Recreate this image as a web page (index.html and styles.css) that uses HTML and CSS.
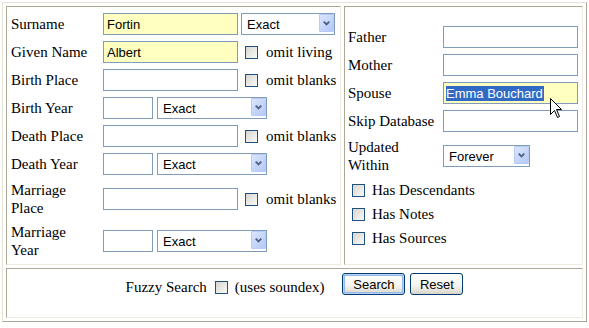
FILE: index.html
```html
<!DOCTYPE html>
<html>
<head>
<meta charset="UTF-8">
<title>Search</title>
<link rel="stylesheet" href="styles.css">
</head>
<body>
<form class="frame">
	<div class="cell left">
		<div class="grid">
			<label>Surname</label>
			<div class="f">
				<input class="txt w135 filled" value="Fortin">
				<span class="sel w94 ml3"><select><option>Exact</option></select><b class="arr"><svg width="7" height="5" viewBox="0 0 7 5"><polyline points="0.7,0.7 3.5,3.5 6.3,0.7" fill="none" stroke="#4d6185" stroke-width="1.8"/></svg></b></span>
			</div>
			<label>Given Name</label>
			<div class="f">
				<input class="txt w135 filled" value="Albert">
				<input type="checkbox" class="chk ml7"><span class="opt">omit living</span>
			</div>
			<label>Birth Place</label>
			<div class="f">
				<input class="txt w135">
				<input type="checkbox" class="chk ml7"><span class="opt">omit blanks</span>
			</div>
			<label>Birth Year</label>
			<div class="f">
				<input class="txt w50">
				<span class="sel w110 ml4"><select><option>Exact</option></select><b class="arr"><svg width="7" height="5" viewBox="0 0 7 5"><polyline points="0.7,0.7 3.5,3.5 6.3,0.7" fill="none" stroke="#4d6185" stroke-width="1.8"/></svg></b></span>
			</div>
			<label>Death Place</label>
			<div class="f">
				<input class="txt w135">
				<input type="checkbox" class="chk ml7"><span class="opt">omit blanks</span>
			</div>
			<label>Death Year</label>
			<div class="f">
				<input class="txt w50">
				<span class="sel w110 ml4"><select><option>Exact</option></select><b class="arr"><svg width="7" height="5" viewBox="0 0 7 5"><polyline points="0.7,0.7 3.5,3.5 6.3,0.7" fill="none" stroke="#4d6185" stroke-width="1.8"/></svg></b></span>
			</div>
			<label>Marriage Place</label>
			<div class="f">
				<input class="txt w135">
				<input type="checkbox" class="chk ml7"><span class="opt">omit blanks</span>
			</div>
			<label>Marriage Year</label>
			<div class="f">
				<input class="txt w50">
				<span class="sel w110 ml4"><select><option>Exact</option></select><b class="arr"><svg width="7" height="5" viewBox="0 0 7 5"><polyline points="0.7,0.7 3.5,3.5 6.3,0.7" fill="none" stroke="#4d6185" stroke-width="1.8"/></svg></b></span>
			</div>
		</div>
	</div>
	<div class="cell right">
		<div class="grid rgrid">
			<label>Father</label>
			<div class="f"><input class="txt w135"></div>
			<label>Mother</label>
			<div class="f"><input class="txt w135"></div>
			<label>Spouse</label>
			<div class="f spouse">
				<div class="txt w135 filled fake"><span class="hl">Emma Bouchard</span></div>
				<svg class="cursor" width="13" height="21" viewBox="0 0 13 21"><path d="M0.5,0.5 L0.5,16.5 L4.5,12.5 L7.5,19.5 L9.5,18.5 L6.5,11.5 L11.5,11.5 Z" fill="#fff" stroke="#000" stroke-width="1"/></svg>
			</div>
			<label>Skip Database</label>
			<div class="f"><input class="txt w135"></div>
			<label>Updated Within</label>
			<div class="f">
				<span class="sel w87"><select><option>Forever</option></select><b class="arr"><svg width="7" height="5" viewBox="0 0 7 5"><polyline points="0.7,0.7 3.5,3.5 6.3,0.7" fill="none" stroke="#4d6185" stroke-width="1.8"/></svg></b></span>
			</div>
		</div>
		<ul class="checks">
			<li><input type="checkbox" class="chk"><span>Has Descendants</span></li>
			<li><input type="checkbox" class="chk"><span>Has Notes</span></li>
			<li><input type="checkbox" class="chk"><span>Has Sources</span></li>
		</ul>
	</div>
	<div class="cell bottom">
		<div class="fuzzy">
			<span>Fuzzy Search</span>
			<input type="checkbox" class="chk">
			<span>(uses soundex)</span>
		</div>
		<button type="button" class="btn focus">Search</button>
		<button type="reset" class="btn">Reset</button>
	</div>
</form>
</body>
</html>
```

FILE: styles.css
```css
body{
	margin: 0;
	background: #fff;
	font: 15px/18px "Liberation Serif", "Times New Roman", serif;
	color: #000;
}
.frame{
	margin: 2px 0 0 2px;
	width: 585px;
	box-sizing: border-box;
	border: 1px solid;
	border-color: #e4e2d6 #a8a698 #a8a698 #e4e2d6;
	padding: 3px;
	display: grid;
	grid-template-columns: 335px 239px;
	grid-template-rows: 259px 50px;
	gap: 3px;
}
.cell{
	box-sizing: border-box;
	border: 1px solid;
	border-color: #aca899 #eeece0 #eeece0 #aca899;
	position: relative;
}
.left{
	padding: 6px 0 0 4px;
}
.right{
	padding: 19px 0 0 3px;
}
.bottom{
	grid-column: 1 / 3;
	display: flex;
	justify-content: center;
	align-items: flex-start;
	padding-top: 4px;
}
.grid{
	display: grid;
	grid-template-columns: 84px auto;
	column-gap: 8px;
	row-gap: 6px;
	align-items: center;
}
.rgrid{
	grid-template-columns: 91px 135px;
	column-gap: 4px;
}
.f{
	display: flex;
	align-items: center;
	height: 22px;
}
.txt{
	box-sizing: border-box;
	height: 22px;
	margin: 0;
	border: 1px solid #7f9db9;
	padding: 0 3px;
	font: 13px "Liberation Sans", Arial, sans-serif;
	color: #000;
	background: #fff;
	outline: none;
}
.filled{
	background: #ffffc0;
}
.fake{
	display: flex;
	align-items: center;
	padding-left: 2px;
}
.hl{
	background: #316ac5;
	color: #fff;
	line-height: 15px;
	padding-right: 1px;
}
.spouse{
	position: relative;
}
.cursor{
	position: absolute;
	left: 107px;
	top: 16px;
}
.sel{
	position: relative;
	display: inline-block;
	height: 22px;
}
.sel select{
	-webkit-appearance: none;
	appearance: none;
	box-sizing: border-box;
	width: 100%;
	height: 22px;
	margin: 0;
	border: 1px solid #7f9db9;
	border-radius: 0;
	padding: 0 0 0 5px;
	background: #fff;
	font: 13px "Liberation Sans", Arial, sans-serif;
	color: #000;
}
.arr{
	position: absolute;
	right: 1px;
	top: 1px;
	width: 15px;
	height: 18px;
	box-sizing: border-box;
	border: 1px solid #b7cbf6;
	border-radius: 1px;
	background: linear-gradient(135deg, #dbe6fd, #b4c8f6);
	display: flex;
	align-items: center;
	justify-content: center;
	pointer-events: none;
}
.arr svg{
	margin-top: 1px;
}
.chk{
	-webkit-appearance: none;
	appearance: none;
	width: 13px;
	height: 13px;
	margin: 0;
	box-sizing: border-box;
	border: 1px solid #1c5180;
	background: linear-gradient(135deg, #d6d5cd, #fbfbf9);
	flex: none;
}
.opt{
	margin-left: 8px;
	white-space: nowrap;
}
.checks{
	list-style: none;
	margin: 4px 0 0 4px;
	padding: 0;
}
.checks li{
	display: flex;
	align-items: center;
	height: 24px;
}
.checks span{
	margin-left: 7px;
}
.fuzzy{
	display: flex;
	align-items: center;
	height: 18px;
	margin-top: 5px;
	margin-right: 18px;
}
.fuzzy .chk{
	margin: 0 7px 0 8px;
}
.btn{
	box-sizing: border-box;
	height: 22px;
	margin: 0;
	padding: 0 8px;
	border: 1px solid #003c74;
	border-radius: 3px;
	background: linear-gradient(#ffffff, #f4f3ee 60%, #d8d5c8);
	font: 13px "Liberation Sans", Arial, sans-serif;
	color: #000;
}
.btn.focus{
	width: 63px;
	box-shadow: inset 0 0 0 1px #b8d0f4, inset 0 0 0 2px #98b8ea;
}
.btn + .btn{
	margin-left: 5px;
	width: 53px;
}
/* widths and spacing */
.w135{width: 135px;}
.w50{width: 50px;}
.w94{width: 94px;}
.w110{width: 110px;}
.w87{width: 87px;}
.ml3{margin-left: 3px;}
.ml4{margin-left: 4px;}
.ml7{margin-left: 7px;}
```
